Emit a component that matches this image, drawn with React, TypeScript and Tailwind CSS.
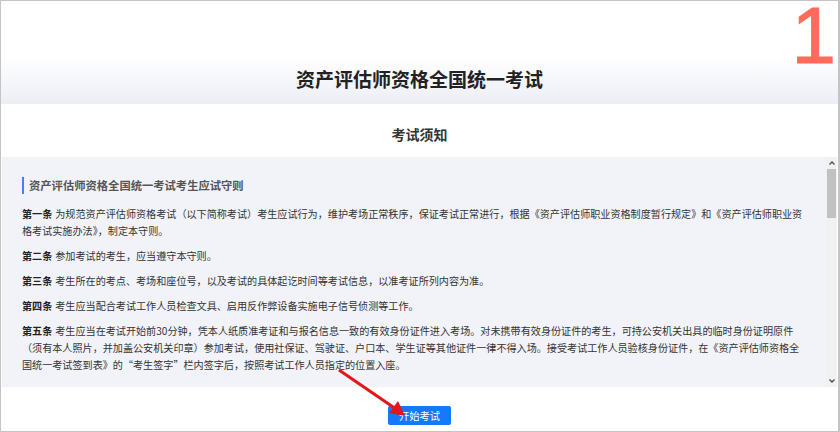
import React from "react";

const FONT = '"Noto Sans CJK SC", "Noto Sans", sans-serif';

const articles: { no: string; text: string }[] = [
  {
    no: "第一条",
    text: "为规范资产评估师资格考试（以下简称考试）考生应试行为，维护考场正常秩序，保证考试正常进行，根据《资产评估师职业资格制度暂行规定》和《资产评估师职业资格考试实施办法》，制定本守则。",
  },
  { no: "第二条", text: "参加考试的考生，应当遵守本守则。" },
  {
    no: "第三条",
    text: "考生所在的考点、考场和座位号，以及考试的具体起讫时间等考试信息，以准考证所列内容为准。",
  },
  {
    no: "第四条",
    text: "考生应当配合考试工作人员检查文具、启用反作弊设备实施电子信号侦测等工作。",
  },
  {
    no: "第五条",
    text: "考生应当在考试开始前30分钟，凭本人纸质准考证和与报名信息一致的有效身份证件进入考场。对未携带有效身份证件的考生，可持公安机关出具的临时身份证明原件（须有本人照片，并加盖公安机关印章）参加考试，使用社保证、驾驶证、户口本、学生证等其他证件一律不得入场。接受考试工作人员验核身份证件，在《资产评估师资格全国统一考试签到表》的“考生签字”栏内签字后，按照考试工作人员指定的位置入座。",
  },
];

function Scrollbar() {
  return (
    <div className="flex w-[11px] shrink-0 flex-col items-center bg-[#f1f1f1]">
      <svg width="8" height="8" viewBox="0 0 8 8" className="mt-[2px]">
        <path d="M1.5 5.5 L4 3 L6.5 5.5" fill="none" stroke="#505050" strokeWidth="1.4" />
      </svg>
      <div className="mt-[2px] h-[49px] w-[9px] bg-[#c1c1c1]" />
      <div className="flex-1" />
      <svg width="8" height="8" viewBox="0 0 8 8" className="mb-[2px]">
        <path d="M1.5 2.5 L4 5 L6.5 2.5" fill="none" stroke="#505050" strokeWidth="1.4" />
      </svg>
    </div>
  );
}

export default function App() {
  return (
    <div
      className="relative h-[432px] w-[840px] overflow-hidden border border-r-2 border-[#c4c4c4] bg-white"
      style={{ fontFamily: FONT }}>
      {/* header */}
      <div className="h-[103px] bg-linear-to-b from-white from-55% to-[#eceef5] pt-[65px] text-center">
        <h1 className="text-[19px] font-bold leading-[26px] text-[#222]">
          资产评估师资格全国统一考试
        </h1>
      </div>

      <div className="h-[53px] pt-[20px] text-center">
        <h2 className="text-[14px] font-bold leading-[20px] text-[#333]">考试须知</h2>
      </div>

      {/* notice panel */}
      <div className="mx-px flex h-[230px] bg-[#f2f3f8]">
        <div className="flex-1 overflow-hidden pl-[20px] pt-[20px]">
          <div className="w-[783px]">
            <div className="mb-[11px] flex items-center">
              <span className="mr-[5px] h-[17px] w-[2px] bg-[#4a7ef5]" />
              <span className="text-[11.3px] font-bold leading-[17px] text-[#555]">
                资产评估师资格全国统一考试考生应试守则
              </span>
            </div>
            {articles.map((a) => (
              <p key={a.no} className="mb-[8px] text-[10.1px] leading-[17px] text-[#333]">
                <b className="mr-[3px] text-[#222]">{a.no}</b>
                {a.text}
              </p>
            ))}
          </div>
        </div>
        <Scrollbar />
      </div>

      {/* footer */}
      <div className="flex justify-center pt-[19px]">
        <button
          type="button"
          className="h-[19px] w-[63px] rounded-[2px] bg-[#1677ff] text-[10.3px] leading-[19px] text-white">
          开始考试
        </button>
      </div>

      {/* red step number */}
      <div
        className="absolute right-[2px] top-0 text-[80px] leading-[70px] text-[#ff6a5a] [-webkit-text-stroke:1px_#ff6a5a]"
        style={{ fontFamily: '"Liberation Sans", Arial, sans-serif' }}>
        1
      </div>

      {/* annotation arrow */}
      <svg className="pointer-events-none absolute left-0 top-0" width="840" height="432">
        <line x1="338" y1="369" x2="395" y2="408" stroke="#e8141c" strokeWidth="3" />
        <polygon points="404,415 388,412 397,400" fill="#e8141c" />
      </svg>
    </div>
  );
}
